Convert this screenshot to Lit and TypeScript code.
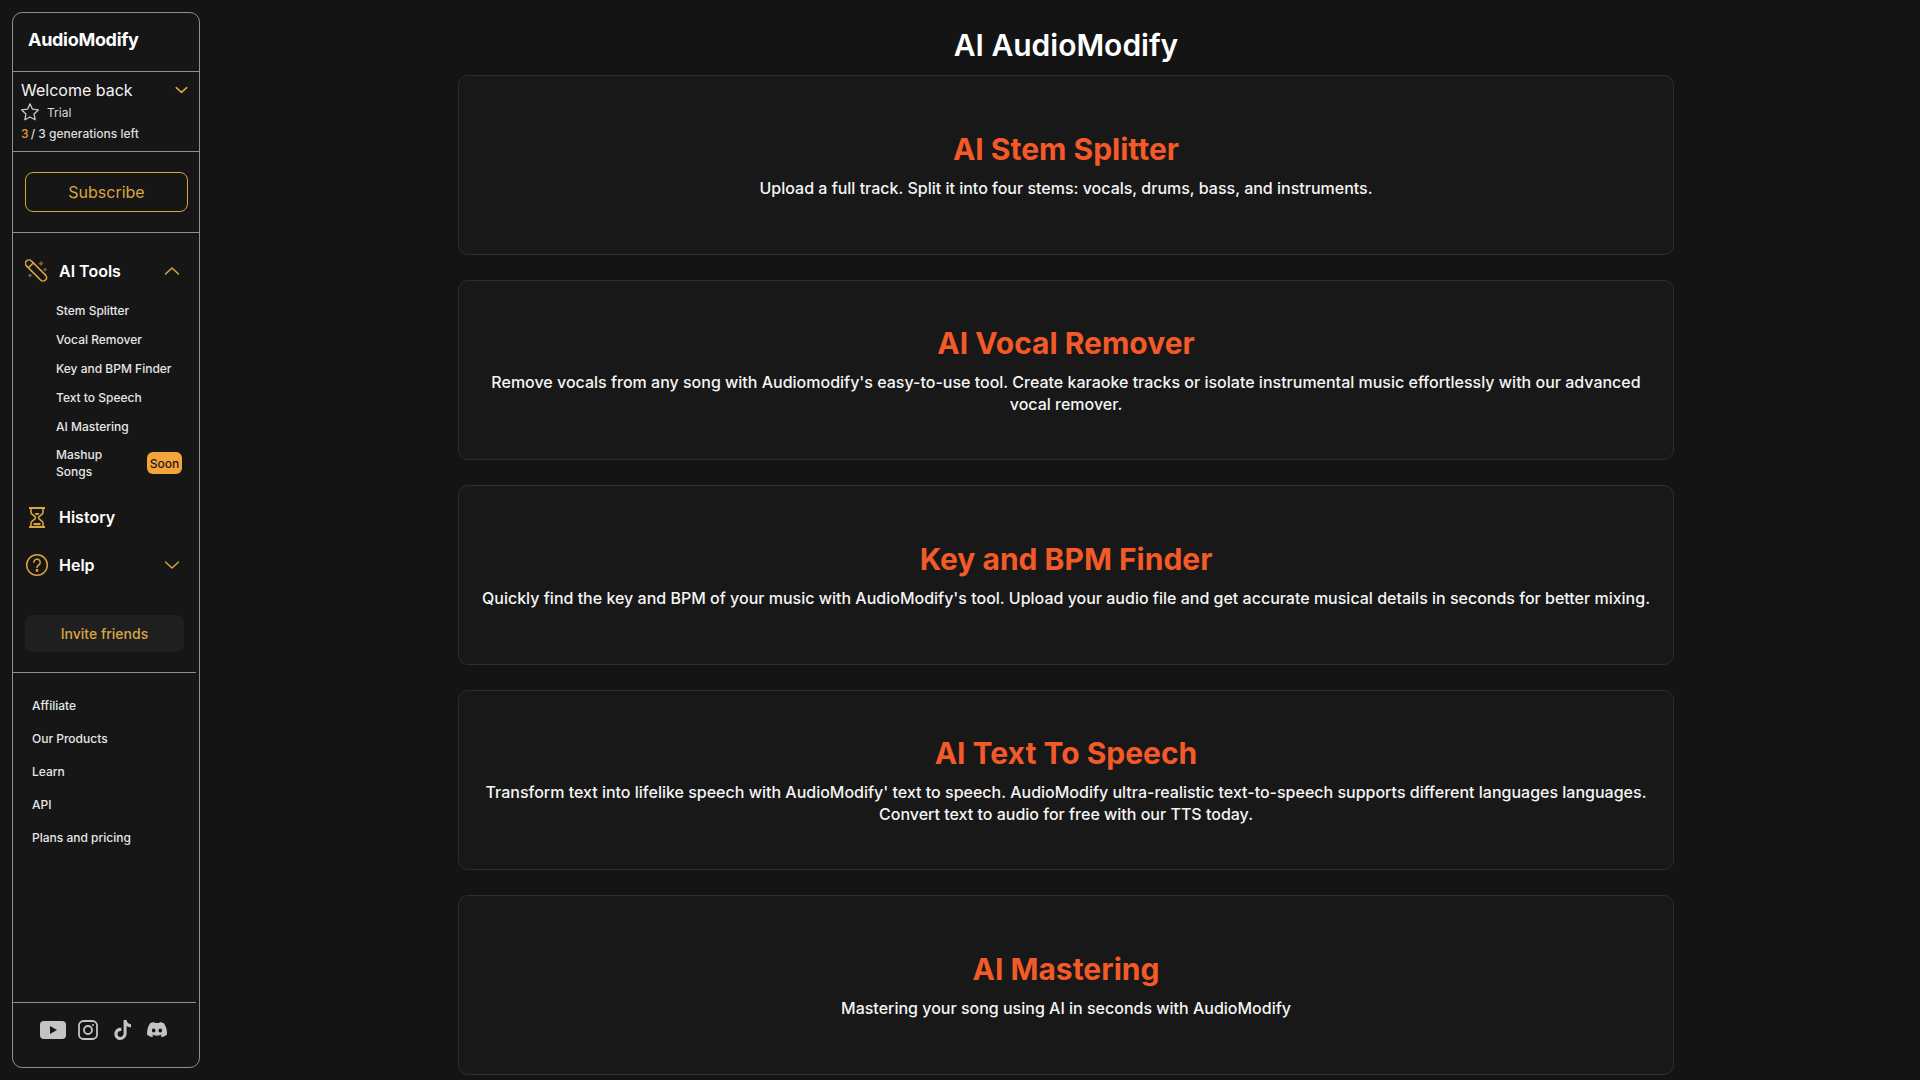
import { LitElement, html, css } from "lit";
import { customElement } from "lit/decorators.js";

const chevron = (up: boolean) => html`<svg class="chev" width="16" height="10" viewBox="0 0 16 10" fill="none" stroke="currentColor" stroke-width="1.5" stroke-linecap="round" stroke-linejoin="round"><path d=${up ? "M1.5 8 L8 2 L14.5 8" : "M1.5 2 L8 8 L14.5 2"}></path></svg>`;

const cards = [
  ["AI Stem Splitter", "Upload a full track. Split it into four stems: vocals, drums, bass, and instruments."],
  ["AI Vocal Remover", "Remove vocals from any song with Audiomodify's easy-to-use tool. Create karaoke tracks or isolate instrumental music effortlessly with our advanced vocal remover."],
  ["Key and BPM Finder", "Quickly find the key and BPM of your music with AudioModify's tool. Upload your audio file and get accurate musical details in seconds for better mixing."],
  ["AI Text To Speech", "Transform text into lifelike speech with AudioModify' text to speech. AudioModify ultra-realistic text-to-speech supports different languages languages. Convert text to audio for free with our TTS today."],
  ["AI Mastering", "Mastering your song using AI in seconds with AudioModify"],
];

@customElement("app-root")
export class AppRoot extends LitElement {
  static styles = css`
    :host {
      display: flex;
      align-items: flex-start;
      min-height: 100vh;
      height: 1080px;
      overflow: hidden;
      background: #141414;
      color: #fff;
      font-family: Inter, "Liberation Sans", sans-serif;
    }
    .side {
      box-sizing: border-box;
      flex: none;
      width: 188px;
      height: 1056px;
      margin: 12px 12px 0 12px;
      border: 1px solid #8f8f8f;
      border-radius: 10px;
      background: #161616;
      display: flex;
      flex-direction: column;
    }
    .logo {
      box-sizing: border-box;
      height: 59px;
      padding: 0 0 5px 15px;
      display: flex;
      align-items: center;
      font-size: 18px;
      font-weight: 700;
      letter-spacing: -0.3px;
      border-bottom: 1px solid #8f8f8f;
    }
    .acct {
      box-sizing: border-box;
      height: 80px;
      padding: 8px 11px 0 8px;
      border-bottom: 1px solid #8f8f8f;
      font-size: 12px;
    }
    .welcome {
      display: flex;
      justify-content: space-between;
      align-items: center;
      font-size: 16px;
      line-height: 20px;
      color: #f4f4f4;
    }
    .welcome .chev { width: 13px; height: 8px; color: #d9a441; stroke-width: 2; }
    .trial {
      display: flex;
      align-items: center;
      gap: 8px;
      margin-top: 2px;
      height: 20px;
      color: #dddddd;
    }
    .gens { margin-top: 4px; line-height: 16px; color: #dddddd; font-weight: 500; }
    .gens b { color: #e59a3c; font-weight: 500; margin-right: -1px; }
    .subwrap {
      box-sizing: border-box;
      height: 81px;
      padding: 20px 11px 0 12px;
      border-bottom: 1px solid #8f8f8f;
    }
    .sub {
      box-sizing: border-box;
      height: 40px;
      border: 1px solid #e0a040;
      border-radius: 8px;
      display: flex;
      align-items: center;
      justify-content: center;
      font-size: 16px;
      color: #d9a441;
      font-weight: 400;
    }
    .nav { padding: 18px 13px 0 12px; }
    .row {
      display: flex;
      align-items: center;
      height: 40px;
      font-size: 16px;
      font-weight: 600;
    }
    .row svg.ic { flex: none; width: 24px; height: 24px; margin-right: 10px; color: #d9a441; }
    .row span { flex: 1; }
    .row .chev { color: #d9a441; margin-right: 6px; }
    .subs { margin: 0 0 17px 0; padding: 5px 0 0 31px; list-style: none; font-size: 12px; font-weight: 500; color: #e6e6e6; }
    .subs li { height: 29px; display: flex; align-items: center; }
    .subs li.masher { height: 34px; line-height: 17px; margin-top: 5px; justify-content: space-between; }
    .soon {
      flex: none;
      box-sizing: border-box;
      width: 35px;
      height: 22px;
      margin-right: 4px;
      border-radius: 6px;
      background: #f5a43c;
      color: #1a1a1a;
      font-size: 12px;
      display: flex;
      align-items: center;
      justify-content: center;
    }
    .mash { width: 60px; }
    .gap8 { margin-top: 8px; }
    .invite {
      box-sizing: border-box;
      height: 37px;
      margin: 30px 15px 0 12px;
      border-radius: 8px;
      background: #1f1f1f;
      color: #d9a441;
      font-size: 14px;
      font-weight: 500;
      display: flex;
      align-items: center;
      justify-content: center;
    }
    .sep { height: 1px; background: #8f8f8f; margin-right: 3px; flex: none; }
    .sep.first { margin-top: 20px; }
    .links { margin: 16px 0 0; padding: 0 0 0 19px; list-style: none; font-size: 12px; font-weight: 500; color: #e6e6e6; }
    .links li { height: 33px; display: flex; align-items: center; }
    .grow { flex: 1; }
    .social {
      box-sizing: border-box;
      height: 64px;
      display: flex;
      align-items: center;
      padding: 0 0 10px 27px;
      color: #c4c4c4;
    }
    .social svg { display: block; flex: none; }
    .social .yt { margin-right: 12px; }
    .social .ig { margin-right: 16px; }
    .social .tt { margin-right: 15px; }
    main {
      flex: 1;
      min-width: 0;
      display: flex;
      flex-direction: column;
      align-items: center;
      padding-top: 27px;
    }
    h1 { margin: 0 0 12px; font-size: 30px; line-height: 36px; font-weight: 600; }
    .card {
      box-sizing: border-box;
      width: 1216px;
      height: 180px;
      flex: none;
      margin-bottom: 25px;
      padding: 0 20px;
      border: 1px solid #2e2e2e;
      border-radius: 10px;
      background: #181818;
      display: flex;
      flex-direction: column;
      justify-content: center;
      text-align: center;
    }
    h2 { margin: 0 0 10px; font-size: 30px; line-height: 36px; font-weight: 700; color: #f35a28; }
    p { margin: 0; font-size: 16px; line-height: 22px; font-weight: 500; color: #f5f5f5; }
  `;

  render() {
    return html`
      <aside class="side">
        <div class="logo">AudioModify</div>
        <div class="acct">
          <div class="welcome">Welcome back ${chevron(false)}</div>
          <div class="trial">
            <svg width="18" height="18" viewBox="1.5 1.5 21 21" fill="none" stroke="#c9c9c9" stroke-width="1.5" stroke-linejoin="round"><path d="M12 2.5l2.9 6.2 6.8.9-5 4.7 1.3 6.8-6-3.300-6 3.300 1.300-6.800-5-4.700 6.800-.9z"></path></svg>
            Trial
          </div>
          <div class="gens"><b>3</b> / 3 generations left</div>
        </div>
        <div class="subwrap"><div class="sub">Subscribe</div></div>
        <div class="nav">
          <div class="row">
            <svg class="ic" viewBox="0 0 24 24" fill="none" stroke="currentColor" stroke-width="1.6">
              <rect x="-3.500" y="-13.500" width="7" height="27" rx="3.500" transform="translate(11 11.500) rotate(-45)"></rect>
              <path d="M3.200 9 L9 3.200"></path>
              <path d="M16 2l2.500 2.500-2.500 2.500-2.500-2.500z" fill="currentColor" fill-opacity=".5" stroke="none"></path>
              <path d="M20 8.500l2 2-2 2-2-2z" fill="currentColor" fill-opacity=".5" stroke="none"></path>
              <path d="M5 14.500l2 2-2 2-2-2z" fill="#9a9a8a" fill-opacity=".6" stroke="none"></path>
            </svg>
            <span>AI Tools</span>${chevron(true)}
          </div>
          <ul class="subs">
            <li>Stem Splitter</li>
            <li>Vocal Remover</li>
            <li>Key and BPM Finder</li>
            <li>Text to Speech</li>
            <li>AI Mastering</li>
            <li class="masher"><div class="mash">Mashup Songs</div><div class="soon">Soon</div></li>
          </ul>
          <div class="row">
            <svg class="ic" viewBox="0 0 24 24" fill="none" stroke="currentColor" stroke-width="2" stroke-linejoin="round">
              <path d="M4 3h16M4 22h16"></path>
              <path d="M6 3v4.500c0 2.500 4.500 3 4.500 5.300S6 15.500 6 18v4M18 3v4.500c0 2.500-4.500 3-4.500 5.300S18 15.500 18 18v4" stroke-width="1.600"></path>
              <path d="M8.500 18h7v2.200h-7z" fill="currentColor" stroke="none"></path>
              <path d="M9.500 8h5l-1.500 2h-2z" fill="currentColor" stroke="none"></path>
            </svg>
            <span>History</span>
          </div>
          <div class="row gap8">
            <svg class="ic" viewBox="0 0 24 24" fill="none" stroke="currentColor" stroke-width="1.500" stroke-linecap="round">
              <circle cx="12" cy="12" r="10.300"></circle>
              <path d="M8.800 9.300a3.200 3.200 0 1 1 4.900 2.700c-1.100.7-1.700 1.300-1.700 2.500"></path>
              <circle cx="12" cy="17.500" r=".7" fill="currentColor"></circle>
            </svg>
            <span>Help</span>${chevron(false)}
          </div>
        </div>
        <div class="invite">Invite friends</div>
        <div class="sep first"></div>
        <ul class="links">
          <li>Affiliate</li><li>Our Products</li><li>Learn</li><li>API</li><li>Plans and pricing</li>
        </ul>
        <div class="grow"></div>
        <div class="sep"></div>
        <div class="social">
          <svg class="yt" width="26" height="18" viewBox="0 0 26 18"><rect width="26" height="18" rx="4" fill="currentColor"></rect><path d="M10 5l7 4-7 4z" fill="#161616"></path></svg>
          <svg class="ig" width="20" height="20" viewBox="0 0 20 20" fill="none" stroke="currentColor" stroke-width="1.800"><rect x="1" y="1" width="18" height="18" rx="4.500"></rect><circle cx="10" cy="10" r="4"></circle><circle cx="15" cy="5" r="1" fill="currentColor" stroke="none"></circle></svg>
          <svg class="tt" width="18" height="20" viewBox="0 0 18 20"><path fill="currentColor" d="M9.600 0h3c.2 2.300 1.700 4 4.400 4.300v3c-1.700 0-3.200-.5-4.400-1.400v7.400c0 3.800-2.900 6.700-6.400 6.700C3 20 .4 17.200.4 13.900c0-3.700 3.300-6.600 7-6v3.200c-1.900-.5-3.900.8-3.900 2.800 0 1.700 1.300 3 2.800 3 1.700 0 3.300-1.200 3.300-3.400z"></path></svg>
          <svg width="20" height="16" viewBox="0 0 20 16"><path fill="currentColor" d="M16.900 1.300A16.500 16.500 0 0 0 12.800 0l-.5 1.100a15 15 0 0 0-4.600 0L7.200 0A16.500 16.500 0 0 0 3.100 1.300C.5 5.200-.2 9 .1 12.700A16.600 16.600 0 0 0 5.200 15.300l1.100-1.700-1.700-.8.400-.3c3.200 1.500 6.800 1.500 10 0l.4.300-1.700.8 1.100 1.700a16.600 16.600 0 0 0 5.100-2.600c.4-4.300-.7-8-3-11.400zM6.700 10.500c-1 0-1.800-.9-1.800-2s.8-2 1.800-2 1.800.9 1.800 2-.8 2-1.800 2zm6.600 0c-1 0-1.800-.9-1.800-2s.8-2 1.800-2 1.800.9 1.800 2-.8 2-1.800 2z"></path></svg>
        </div>
      </aside>
      <main>
        <h1>AI AudioModify</h1>
        ${cards.map(
          ([t, d]) => html`<section class="card"><h2>${t}</h2><p>${d}</p></section>`
        )}
      </main>
    `;
  }
}
